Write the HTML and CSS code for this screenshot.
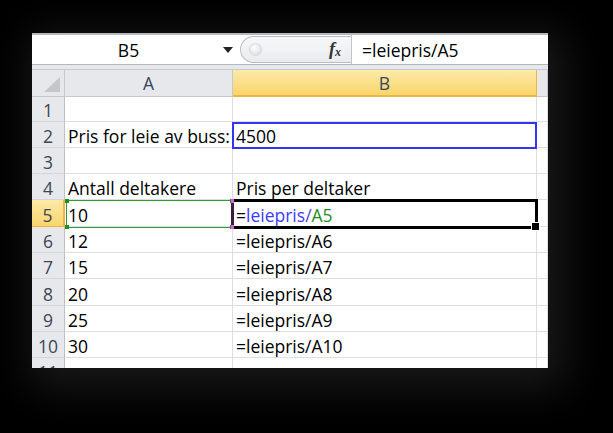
FILE: index.html
```html
<!DOCTYPE html>
<html>
<head>
<meta charset="utf-8">
<link rel="stylesheet" href="styles.css">
</head>
<body>
<div class="stage">
  <div class="shot">
    <div class="fbar">
      <div class="namebox"><span class="ref">B5</span><span class="dd"></span></div>
      <div class="grip"><span class="knob"></span><span class="fx">f<span class="x">x</span></span></div>
      <div class="formula">=leiepris/A5</div>
    </div>
    <div class="fsep"></div>
    <div class="sheet">
      <div class="corner"><svg width="16" height="15" viewBox="0 0 16 15"><polygon points="16,0 16,15 0,15" fill="#c3c7cc"/></svg></div>
      <div class="ch">A</div>
      <div class="ch sel">B</div>
      <div class="ch"></div>

      <div class="rh">1</div><div class="c"></div><div class="c"></div><div class="c"></div>
      <div class="rh">2</div><div class="c">Pris for leie av buss:</div><div class="c">4500</div><div class="c"></div>
      <div class="rh">3</div><div class="c"></div><div class="c"></div><div class="c"></div>
      <div class="rh">4</div><div class="c">Antall deltakere</div><div class="c">Pris per deltaker</div><div class="c"></div>
      <div class="rh sel">5</div><div class="c">10</div><div class="c">=<span class="blue">leiepris</span><span class="slash">/</span><span class="green">A5</span></div><div class="c"></div>
      <div class="rh">6</div><div class="c">12</div><div class="c">=leiepris/A6</div><div class="c"></div>
      <div class="rh">7</div><div class="c">15</div><div class="c">=leiepris/A7</div><div class="c"></div>
      <div class="rh">8</div><div class="c">20</div><div class="c">=leiepris/A8</div><div class="c"></div>
      <div class="rh">9</div><div class="c">25</div><div class="c">=leiepris/A9</div><div class="c"></div>
      <div class="rh">10</div><div class="c">30</div><div class="c">=leiepris/A10</div><div class="c"></div>
      <div class="rh">11</div><div class="c"></div><div class="c"></div><div class="c"></div>

      <div class="hl-blue"></div>
      <div class="hl-green"><span class="sq tl"></span><span class="sq tr"></span><span class="sq bl"></span><span class="sq br"></span></div>
      <div class="active"><span class="mg top"></span><span class="mg bot"></span><span class="handle"></span></div>
    </div>
  </div>
</div>
</body>
</html>
```

FILE: styles.css
```css
html, body {
  margin: 0;
  padding: 0;
  background: #000;
}
body {
  width: 613px;
  height: 433px;
  overflow: hidden;
  font-family: "Open Sans", "Noto Sans", sans-serif;
  font-size: 17.5px;
  color: #000;
}
.stage {
  padding: 33px 0 0 32px;
}
.shot {
  width: 516px;
  height: 335px;
  background: #fff;
  overflow: hidden;
  box-shadow: 8px 10px 40px 10px rgba(34, 34, 34, 0.75);
}

/* formula bar */
.fbar {
  display: flex;
  height: 29px;
  border-top: 2px solid #b4b9bf;
  background: #fff;
}
.namebox {
  width: 208px;
  display: flex;
  align-items: center;
}
.ref {
  flex: 1;
  text-align: center;
  padding-left: 2px;
  line-height: 20px;
}
.dd {
  width: 0;
  height: 0;
  border-left: 5px solid transparent;
  border-right: 5px solid transparent;
  border-top: 6px solid #222;
  margin-right: 7px;
}
.grip {
  width: 111px;
  margin: 1px 0;
  border: 1px solid #b9bec4;
  border-right: none;
  border-radius: 14px 0 0 14px;
  background: linear-gradient(#f7f8f9, #e9ebee);
  display: flex;
  align-items: center;
  justify-content: space-between;
  box-sizing: border-box;
}
.knob {
  width: 11px;
  height: 11px;
  margin-left: 8px;
  border-radius: 50%;
  background: radial-gradient(circle at 40% 35%, #ffffff, #d3d6da);
  border: 1px solid #d6d9dd;
}
.fx {
  font-family: "Liberation Serif", serif;
  font-style: italic;
  font-weight: bold;
  font-size: 18px;
  color: #333;
  margin-right: 10px;
  line-height: 20px;
}
.fx .x {
  font-size: 12px;
  position: relative;
  top: 1px;
}
.formula {
  flex: 1;
  border-left: 1px solid #c2c6cc;
  padding-left: 10px;
  display: flex;
  align-items: center;
  line-height: 20px;
}
.fsep {
  height: 4px;
  border-top: 1px solid #b3b8be;
  border-bottom: 1px solid #c6cbd1;
  background: #e6e8eb;
}

/* sheet grid */
.sheet {
  position: relative;
  display: grid;
  grid-template-columns: 33px 168px 304px 11px;
  grid-template-rows: 27px 25px 26px 26px 26px 27px 26px 26px 27px 26px 26px 26px;
}
.sheet > div {
  box-sizing: border-box;
}
.corner {
  background: #e6e8eb;
  border-right: 1px solid #c5c9ce;
  border-bottom: 1px solid #c5c9ce;
  display: flex;
  align-items: flex-end;
  justify-content: flex-end;
  padding: 0 4px 4px 0;
}
.ch {
  background: #e6e8eb;
  border-right: 1px solid #c5c9ce;
  border-bottom: 1px solid #c5c9ce;
  color: #36475b;
  display: flex;
  align-items: center;
  justify-content: center;
  line-height: 20px;
}
.ch.sel {
  background: linear-gradient(#fdeaa9, #f9d56c);
  border-right-color: #eeb545;
  border-bottom: 2px solid #f0b441;
}
.rh {
  background: #e6e8eb;
  border-right: 1px solid #bcc0c6;
  border-bottom: 1px solid #d2d5d9;
  color: #3d4655;
  display: flex;
  align-items: flex-end;
  justify-content: center;
  line-height: 20px;
  padding-bottom: 1px;
}
.rh.sel {
  background: linear-gradient(#fdeaa9, #f9d56c);
  border-right: 2px solid #f0b441;
  border-bottom-color: #eeb545;
}
.c {
  border-right: 1px solid #dcdfe2;
  border-bottom: 1px solid #dcdfe2;
  display: flex;
  align-items: flex-end;
  padding: 0 0 1px 3px;
  line-height: 20px;
  white-space: nowrap;
}
.blue { color: #3c3cff; }
.slash { color: #5a3ce0; }
.green { color: #1f8f1f; }

/* range highlights */
.hl-blue {
  position: absolute;
  left: 200px;
  top: 52px;
  width: 305px;
  height: 27px;
  border: 2px solid #3434f4;
  box-sizing: border-box;
}
.hl-green {
  position: absolute;
  left: 34px;
  top: 130px;
  width: 167px;
  height: 28px;
  border: 1px solid #2f9a2f;
  box-sizing: border-box;
}
.sq {
  position: absolute;
  width: 4px;
  height: 4px;
  background: #1f8f1f;
}
.sq.tl { left: -2px; top: -2px; }
.sq.tr { right: -2px; top: -2px; }
.sq.bl { left: -2px; bottom: -2px; }
.sq.br { right: -2px; bottom: -2px; }
.active {
  position: absolute;
  left: 199px;
  top: 129px;
  width: 307px;
  height: 30px;
  border: 3px solid #000;
  border-left-color: #3a1f3a;
  box-sizing: border-box;
}
.mg {
  position: absolute;
  left: -3px;
  width: 3px;
  height: 4px;
  background: #e45ae4;
}
.mg.top { top: -3px; }
.mg.bot { bottom: -3px; }
.handle {
  position: absolute;
  right: -5px;
  bottom: -5px;
  width: 7px;
  height: 7px;
  background: #000;
  border: 1px solid #fff;
}
```
